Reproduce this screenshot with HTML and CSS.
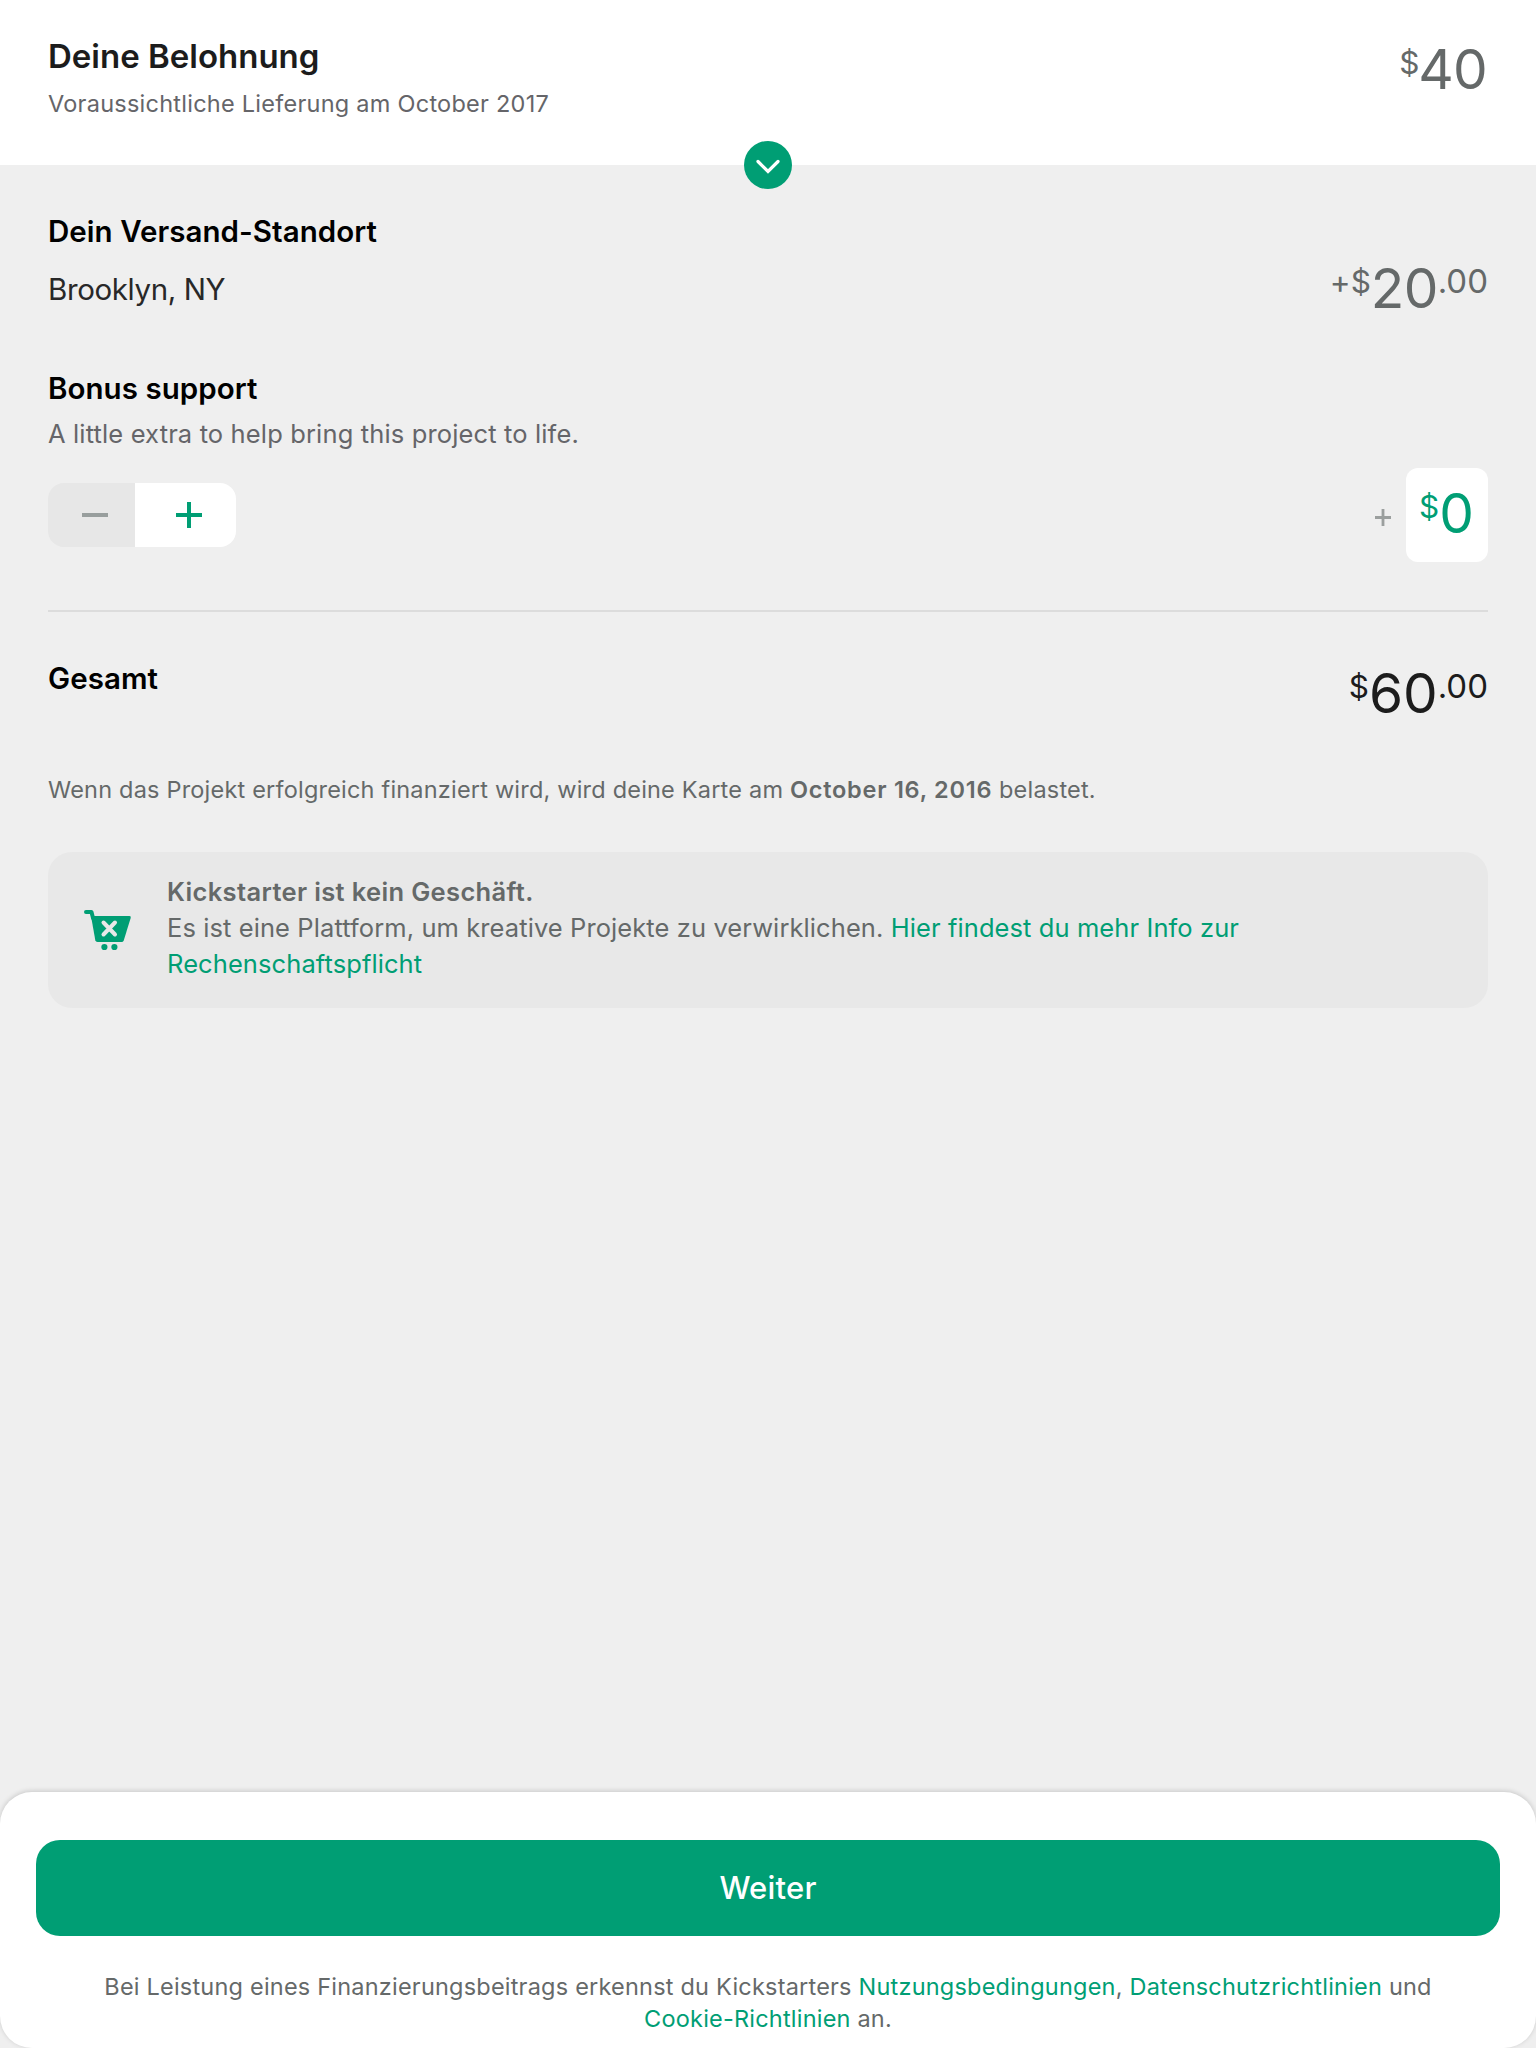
FILE: index.html
```html
<!DOCTYPE html>
<html lang="de">
<head>
<meta charset="utf-8">
<title>Deine Belohnung</title>
<link rel="stylesheet" href="styles.css">
</head>
<body>
<div class="page">
  <header class="reward">
    <div class="reward-text">
      <h1 class="reward-title">Deine Belohnung</h1>
      <p class="reward-delivery">Voraussichtliche Lieferung am October 2017</p>
    </div>
    <div class="money money-reward"><span class="sup sign">$</span><span class="main">40</span></div>
    <button class="expand" aria-label="Details">
      <svg width="48" height="48" viewBox="0 0 48 48"><path d="M14 20.5 24 30.5 34 20.5" fill="none" stroke="#fff" stroke-width="3.2" stroke-linecap="round"/></svg>
    </button>
  </header>

  <main class="pledge">
    <section class="row shipping">
      <div>
        <h2 class="label">Dein Versand-Standort</h2>
        <p class="location">Brooklyn, NY</p>
      </div>
      <div class="money money-shipping"><span class="sup sign">+</span><span class="sup sign">$</span><span class="main">20</span><span class="sup">.00</span></div>
    </section>

    <section class="bonus">
      <h2 class="label">Bonus support</h2>
      <p class="hint">A little extra to help bring this project to life.</p>
      <div class="row bonus-controls">
        <div class="stepper">
          <button class="step step-minus" aria-label="Weniger"><svg width="28" height="28" viewBox="0 0 28 28"><path d="M1 14H27" stroke="#989e9d" stroke-width="4"/></svg></button>
          <button class="step step-plus" aria-label="Mehr"><svg width="28" height="28" viewBox="0 0 28 28"><path d="M1 14H27M14 1V27" stroke="#009e74" stroke-width="4"/></svg></button>
        </div>
        <div class="amount">
          <svg class="amount-plus" width="16" height="17" viewBox="0 0 16 17"><path d="M0 8.5H16M8 0V17" stroke="#9b9f9e" stroke-width="2.8"/></svg>
          <div class="amount-field money"><span class="sup sign">$</span><span class="main">0</span></div>
        </div>
      </div>
    </section>

    <hr class="rule">

    <section class="row total">
      <h2 class="label">Gesamt</h2>
      <div class="money money-total"><span class="sup sign">$</span><span class="main">60</span><span class="sup">.00</span></div>
    </section>

    <p class="charge">Wenn das Projekt erfolgreich finanziert wird, wird deine Karte am <b>October 16, 2016</b> belastet.</p>

    <aside class="notice">
      <svg class="cart" width="48" height="42" viewBox="0 0 48 42">
        <path d="M2 2H7.5L9 8" fill="none" stroke="#009e74" stroke-width="4" stroke-linecap="round" stroke-linejoin="round"/>
        <path d="M7 6H45.5Q47.300 6 46.700 8L39.700 30.500Q39.200 32 37.500 32H13.500Q11.700 32 11.300 30.300Z" fill="#009e74"/>
        <path d="M19.500 12.500 31 24.500M31 12.500 19.500 24.500" stroke="#e8e8e8" stroke-width="4" stroke-linecap="round"/>
        <circle cx="20.400" cy="37" r="3.100" fill="#009e74"/><circle cx="30.400" cy="37" r="3.100" fill="#009e74"/>
      </svg>
      <p class="notice-text"><b>Kickstarter ist kein Geschäft.</b><br>Es ist eine Plattform, um kreative Projekte zu verwirklichen. <a>Hier findest du mehr Info zur<br>Rechenschaftspflicht</a></p>
    </aside>
  </main>

  <footer class="footer">
    <button class="continue">Weiter</button>
    <p class="legal">Bei Leistung eines Finanzierungsbeitrags erkennst du Kickstarters <a>Nutzungsbedingungen</a>, <a>Datenschutzrichtlinien</a> und<br><a>Cookie-Richtlinien</a> an.</p>
  </footer>
</div>
</body>
</html>
```
FILE: styles.css
```css
* { box-sizing: border-box; }

body {
  margin: 0;
  background: #efefef;
  color: #1c1c1c;
  font-family: Inter, "Liberation Sans", sans-serif;
}

h1, h2, p { margin: 0; }
button { border: 0; padding: 0; font: inherit; }
a { color: #009e74; text-decoration: none; }
b { font-weight: 600; }

.page {
  width: 1536px;
  height: 2048px;
  display: flex;
  flex-direction: column;
  overflow: hidden;
}

.reward {
  position: relative;
  display: flex;
  justify-content: space-between;
  height: 165px;
  padding: 36px 48px 0;
  background: #fff;
}
.reward-title {
  font-size: 33px;
  line-height: 40px;
  font-weight: 600;
}
.reward-delivery {
  margin-top: 12px;
  font-size: 23.5px;
  line-height: 32px;
  letter-spacing: 0.25px;
  color: #656569;
}
.expand {
  position: absolute;
  left: 744px;
  top: 141px;
  width: 48px;
  height: 48px;
  border-radius: 50%;
  background: #009e74;
}
.expand svg { display: block; }

.money {
  display: flex;
  align-items: flex-start;
  color: #656969;
}
.money .main {
  font-size: 55px;
  line-height: 56px;
}
.money .sup {
  margin-top: 1px;
  font-size: 33px;
  line-height: 40px;
}
.money .sign {
  margin-top: 2px;
  font-size: 31.5px;
}
.money-reward { padding: 5px 1px 0 0; }
.money-reward .main { letter-spacing: -0.8px; }
.money-reward .sign { margin-right: -1px; }
.money-shipping { padding-top: 47px; }
.money-shipping .main { letter-spacing: -0.7px; }
.money-total { padding-top: 5px; color: #1c1c1c; }

.pledge {
  flex: 1;
  padding: 48px 48px 0;
}
.row {
  display: flex;
  justify-content: space-between;
  align-items: flex-start;
}
.label {
  font-size: 29.5px;
  line-height: 36px;
  font-weight: 600;
  letter-spacing: 0.05px;
  color: #000;
}
.location {
  margin-top: 22px;
  font-size: 29.5px;
  line-height: 36px;
  letter-spacing: -0.38px;
  color: #282828;
}
.shipping { height: 157px; }

.hint {
  margin-top: 12px;
  font-size: 25.5px;
  line-height: 32px;
  letter-spacing: 0.14px;
  color: #656569;
}
.bonus-controls {
  height: 94px;
  margin-top: 18px;
  align-items: center;
}
.stepper {
  display: flex;
  width: 188px;
  height: 64px;
  border-radius: 16px;
  overflow: hidden;
}
.step svg { display: block; }
.step-minus {
  width: 87px;
  padding-left: 33px;
  background: #e7e7e7;
}
.step-plus {
  flex: 1;
  padding-left: 40px;
  background: #fff;
}
.amount {
  display: flex;
  align-items: center;
  gap: 15px;
}
.amount-plus { margin-top: 5px; }
.amount-field {
  width: 82px;
  height: 94px;
  padding: 17px 1px 0 0;
  justify-content: center;
  border-radius: 12px;
  background: #fff;
  color: #009e74;
}

.rule {
  height: 2px;
  margin: 48px 0;
  border: 0;
  background: #dcdcdc;
}
.total { height: 114px; }
.charge {
  font-size: 23.5px;
  line-height: 32px;
  letter-spacing: 0.2px;
  color: #656969;
}
.charge b { letter-spacing: 0.75px; }

.notice {
  display: flex;
  height: 156px;
  margin-top: 46px;
  padding: 22px 36px 0;
  gap: 35px;
  border-radius: 24px;
  background: #e8e8e8;
}
.cart { margin-top: 36px; flex: none; }
.notice-text {
  font-size: 25.5px;
  line-height: 36px;
  letter-spacing: 0.09px;
  color: #656969;
  white-space: nowrap;
}
.notice-text b { letter-spacing: 0.35px; }

.footer {
  height: 256px;
  padding: 48px 36px 0;
  border-radius: 32px;
  background: #fff;
  box-shadow: 0 -1px 5px rgba(0, 0, 0, 0.17);
}
.continue {
  display: block;
  width: 100%;
  height: 96px;
  border-radius: 24px;
  background: #009e74;
  color: #fff;
  font-size: 31px;
  line-height: 96px;
  letter-spacing: 0.2px;
  font-weight: 500;
}
.legal {
  margin-top: 35px;
  font-size: 23.5px;
  line-height: 32px;
  letter-spacing: 0.21px;
  text-align: center;
  color: #656969;
}
```
